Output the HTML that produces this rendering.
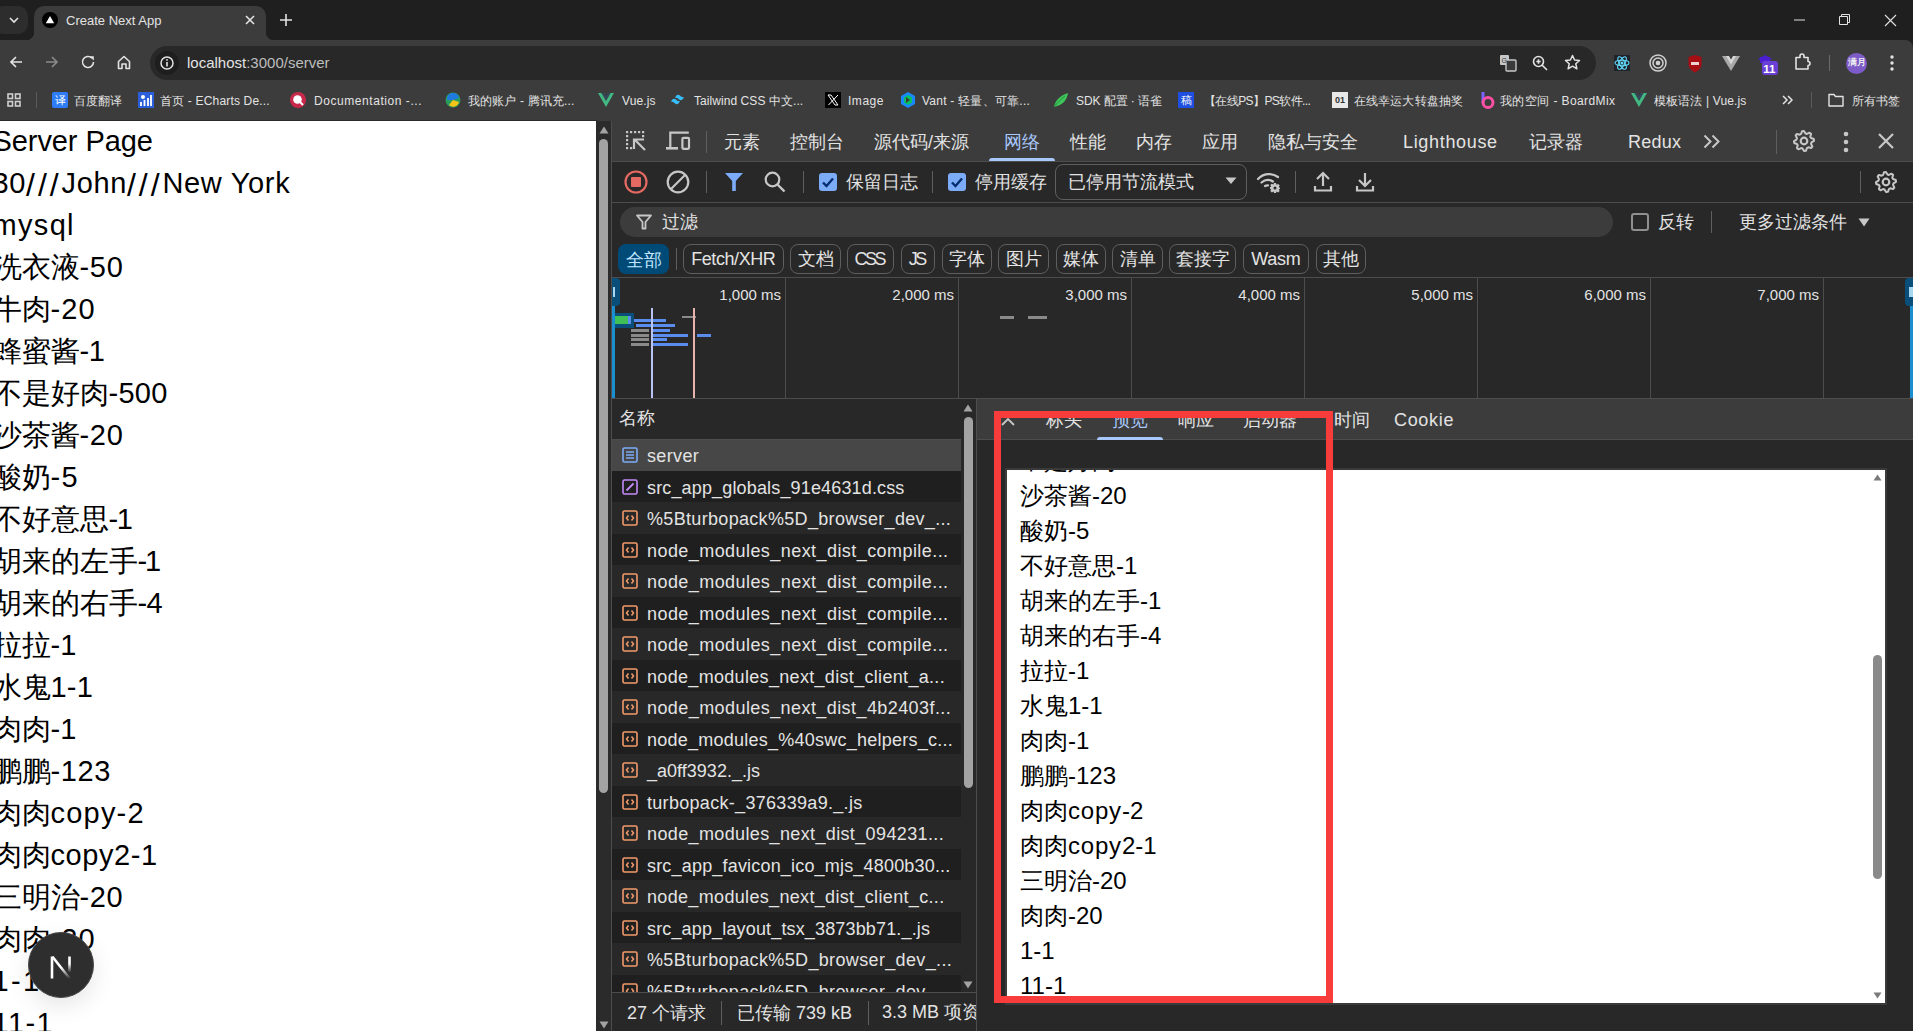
<!DOCTYPE html><html><head><meta charset="utf-8"><style>
*{box-sizing:border-box;margin:0;padding:0}
html,body{width:1913px;height:1031px;overflow:hidden;background:#1f1f1f;font-family:"Liberation Sans",sans-serif;}
.a{position:absolute}
.t{position:absolute;white-space:nowrap;line-height:1}
svg{position:absolute;overflow:visible}
</style></head><body>
<div class="a" style="left:0;top:0;width:1913px;height:40px;background:#1f1f1f"></div>
<div class="a" style="left:0;top:40px;width:1913px;height:81px;background:#3c3c3c;border-top-right-radius:8px"></div>
<div class="a" style="left:-6px;top:6px;width:34px;height:28px;background:#2d2d2d;border-radius:10px"></div>
<svg style="left:9px;top:17px" width="10" height="6"><path d="M1 1 L5 5 L9 1" stroke="#e3e3e3" stroke-width="1.6" fill="none"/></svg>
<div class="a" style="left:34px;top:6px;width:232px;height:35px;background:#3c3c3c;border-radius:10px 10px 0 0"></div>
<div class="a" style="left:26px;top:32px;width:8px;height:8px;background:radial-gradient(circle at 0 0,#1f1f1f 8px,#3c3c3c 8.5px)"></div>
<div class="a" style="left:266px;top:32px;width:8px;height:8px;background:radial-gradient(circle at 100% 0,#1f1f1f 8px,#3c3c3c 8.5px)"></div>
<div class="a" style="left:42px;top:12px;width:16px;height:16px;border-radius:50%;background:#000"></div>
<svg style="left:45px;top:15px" width="10" height="9"><path d="M5 1 L9.2 8.2 L0.8 8.2Z" fill="#fff"/></svg>
<div class="t" style="left:66px;top:14px;font-size:13px;color:#e3e3e3">Create Next App</div>
<svg style="left:245px;top:15px" width="10" height="10"><path d="M1 1L9 9M9 1L1 9" stroke="#e3e3e3" stroke-width="1.6"/></svg>
<svg style="left:280px;top:14px" width="12" height="12"><path d="M6 0V12M0 6H12" stroke="#e3e3e3" stroke-width="1.6"/></svg>
<svg style="left:1794px;top:19px" width="11" height="2"><path d="M0 1H11" stroke="#e3e3e3" stroke-width="1"/></svg>
<svg style="left:1839px;top:14px" width="11" height="11"><path d="M0.5 2.5H8.5V10.5H0.5Z M2.5 2.5V0.5H10.5V8.5H8.5" stroke="#e3e3e3" stroke-width="1" fill="none"/></svg>
<svg style="left:1885px;top:15px" width="11" height="11"><path d="M0 0L11 11M11 0L0 11" stroke="#e3e3e3" stroke-width="1.1"/></svg>
<svg style="left:9px;top:55px" width="14" height="14"><path d="M13 7H2M7 2L2 7L7 12" stroke="#e3e3e3" stroke-width="1.7" fill="none"/></svg>
<svg style="left:45px;top:55px" width="14" height="14"><path d="M1 7H12M7 2L12 7L7 12" stroke="#8a8a8a" stroke-width="1.7" fill="none"/></svg>
<svg style="left:81px;top:55px" width="14" height="14"><path d="M12.5 7A5.5 5.5 0 1 1 10.9 3.1" stroke="#e3e3e3" stroke-width="1.6" fill="none"/><path d="M8.5 1.2H12.8V5.5Z" fill="#e3e3e3"/></svg>
<svg style="left:117px;top:54px" width="14" height="16"><path d="M1.5 7.5L7 2.5L12.5 7.5V14.5H9V10H5V14.5H1.5Z" stroke="#e3e3e3" stroke-width="1.6" fill="none" stroke-linejoin="round"/></svg>
<div class="a" style="left:150px;top:46px;width:1446px;height:34px;background:#282828;border-radius:17px"></div>
<div class="a" style="left:155px;top:51px;width:24px;height:24px;background:#1e1e1e;border-radius:50%"></div>
<svg style="left:160px;top:56px" width="14" height="14"><circle cx="7" cy="7" r="6" stroke="#e3e3e3" stroke-width="1.5" fill="none"/><path d="M7 6V10.5" stroke="#e3e3e3" stroke-width="1.6"/><circle cx="7" cy="3.9" r="0.9" fill="#e3e3e3"/></svg>
<div class="t" style="left:187px;top:55px;font-size:15px;color:#e3e3e3">localhost<span style="color:#bdbdbd">:3000/server</span></div>
<svg style="left:1499px;top:54px" width="18" height="18"><rect x="1" y="1" width="9" height="10" rx="1" fill="#c7c7c7"/><rect x="7" y="6" width="10" height="11" rx="1" stroke="#c7c7c7" stroke-width="1.4" fill="#3a3a3a"/><text x="2.5" y="9" font-size="7" fill="#333" font-family="Liberation Sans">G</text></svg>
<svg style="left:1532px;top:55px" width="16" height="16"><circle cx="6.5" cy="6.5" r="5" stroke="#e3e3e3" stroke-width="1.6" fill="none"/><path d="M10 10L15 15M4.3 6.5H8.7M6.5 4.3V8.7" stroke="#e3e3e3" stroke-width="1.6"/></svg>
<svg style="left:1564px;top:54px" width="17" height="17"><path d="M8.5 1.5L10.6 6L15.5 6.5L11.8 9.8L12.9 14.8L8.5 12.2L4.1 14.8L5.2 9.8L1.5 6.5L6.4 6Z" stroke="#e3e3e3" stroke-width="1.5" fill="none" stroke-linejoin="round"/></svg>
<div class="a" style="left:1614px;top:55px;width:16px;height:16px;background:#20232a"></div>
<svg style="left:1614px;top:55px" width="16" height="16"><g stroke="#61dafb" stroke-width="1.1" fill="none"><ellipse cx="8" cy="8" rx="7" ry="2.7"/><ellipse cx="8" cy="8" rx="7" ry="2.7" transform="rotate(60 8 8)"/><ellipse cx="8" cy="8" rx="7" ry="2.7" transform="rotate(120 8 8)"/></g><circle cx="8" cy="8" r="1.5" fill="#61dafb"/></svg>
<svg style="left:1649px;top:54px" width="18" height="18"><circle cx="9" cy="9" r="8" stroke="#d0d0d0" stroke-width="1.5" fill="none"/><circle cx="9" cy="9" r="5" stroke="#d0d0d0" stroke-width="1.5" fill="none"/><circle cx="9" cy="9" r="2.3" fill="#d0d0d0"/></svg>
<svg style="left:1686px;top:54px" width="18" height="20"><path d="M9 1L15.5 3V10C15.5 14 12.5 16.5 9 18.5C5.5 16.5 2.5 14 2.5 10V3Z" fill="#a50f14"/><rect x="5" y="8" width="8" height="3" fill="#f0d0d0"/></svg>
<svg style="left:1722px;top:56px" width="16" height="15"><path d="M0 0H5L9 7L13 0H18L9 15Z" fill="#a9a9a9"/><path d="M4 0H7L9 3.5L11 0H14L9 8.5Z" fill="#d6d6d6"/></svg>
<svg style="left:1757px;top:53px" width="24" height="24"><path d="M1 6L8 2L15 6L8 10Z" fill="#4b1fd0"/><rect x="3" y="4" width="10" height="6" fill="#4b1fd0"/><rect x="5" y="8" width="16" height="14" rx="3" fill="#6a3fd6"/><text x="6.3" y="19.5" font-size="11.5" font-weight="bold" fill="#fff" font-family="Liberation Sans">11</text></svg>
<svg style="left:1794px;top:53px" width="18" height="18"><path d="M2 4.5H6V3A2 2 0 0 1 10 3V4.5H14V8.5A2 2 0 0 1 14 12.5V16H2Z" stroke="#e3e3e3" stroke-width="1.6" fill="none" stroke-linejoin="round"/></svg>
<div class="a" style="left:1829px;top:55px;width:1px;height:16px;background:#6a6a6a"></div>
<div class="a" style="left:1846px;top:53px;width:21px;height:21px;border-radius:50%;background:#7d5bc9"></div>
<div class="t" style="left:1848px;top:58px;font-size:8.5px;font-weight:bold;color:#eee">满月</div>
<svg style="left:1890px;top:55px" width="4" height="16"><circle cx="2" cy="2" r="1.7" fill="#e3e3e3"/><circle cx="2" cy="8" r="1.7" fill="#e3e3e3"/><circle cx="2" cy="14" r="1.7" fill="#e3e3e3"/></svg>
<svg style="left:7px;top:93px" width="14" height="14"><g fill="none" stroke="#d0d0d0" stroke-width="1.6"><rect x="1" y="1" width="4.5" height="4.5"/><rect x="8.5" y="1" width="4.5" height="4.5"/><rect x="1" y="8.5" width="4.5" height="4.5"/><rect x="8.5" y="8.5" width="4.5" height="4.5"/></g></svg>
<div class="a" style="left:36px;top:92px;width:1px;height:16px;background:#5a5a5a"></div>
<div class="a" style="left:52px;top:92px;width:16px;height:16px;background:#2e7cf6;border-radius:2px;color:#fff;font-size:11px;line-height:16px;text-align:center">译</div>
<div class="t bm" style="left:74px;top:95px;font-size:12px;letter-spacing:0.075px;color:#e3e3e3">百度翻译</div>
<svg style="left:138px;top:92px" width="16" height="16"><rect width="16" height="16" fill="#2b5fd9"/><circle cx="5" cy="5" r="2" fill="#fff"/><path d="M3 14V10M6.5 14V8M10 14V6M13 14V3" stroke="#fff" stroke-width="1.8"/></svg>
<div class="t bm" style="left:160px;top:95px;font-size:12px;letter-spacing:0.173px;color:#e3e3e3">首页 - ECharts De...</div>
<svg style="left:290px;top:92px" width="16" height="16"><circle cx="8" cy="8" r="8" fill="#c8294a"/><circle cx="7.5" cy="7.5" r="4.3" fill="#fff"/><path d="M10 10L13 13" stroke="#fff" stroke-width="2"/></svg>
<div class="t bm" style="left:314px;top:95px;font-size:12px;letter-spacing:0.559px;color:#e3e3e3">Documentation -...</div>
<svg style="left:445px;top:92px" width="16" height="16"><circle cx="8" cy="8" r="7.5" fill="#2a9d5c"/><path d="M2 8A6 6 0 0 1 14 6L8 8Z" fill="#1f7ae0"/><path d="M8 8L14 10A6 6 0 0 1 4 13Z" fill="#f5c518"/></svg>
<div class="t bm" style="left:468px;top:95px;font-size:12px;letter-spacing:0.141px;color:#e3e3e3">我的账户 - 腾讯充...</div>
<svg style="left:598px;top:93px" width="16" height="14"><path d="M0 0H3.5L8 8L12.5 0H16L8 14Z" fill="#42b883"/><path d="M3.5 0H6L8 3.5L10 0H12.5L8 7Z" fill="#35495e"/></svg>
<div class="t bm" style="left:622px;top:95px;font-size:12px;letter-spacing:0.099px;color:#e3e3e3">Vue.js</div>
<svg style="left:671px;top:94px" width="16" height="11"><path d="M4 4C5 1 7 0 9 1.5C10.5 2.6 11 3.5 13 3C12 6 10 7 8 5.5C6.5 4.4 6 3.5 4 4ZM0 8C1 5 3 4 5 5.5C6.5 6.6 7 7.5 9 7C8 10 6 11 4 9.5C2.5 8.4 2 7.5 0 8Z" fill="#38bdf8"/></svg>
<div class="t bm" style="left:694px;top:95px;font-size:12px;letter-spacing:0.065px;color:#e3e3e3">Tailwind CSS 中文...</div>
<div class="a" style="left:825px;top:92px;width:16px;height:16px;background:#000"></div><svg style="left:827px;top:94px" width="12" height="12"><path d="M1 1H4L11 11H8Z" stroke="#fff" stroke-width="1" fill="none"/><path d="M11 1L1.5 11" stroke="#fff" stroke-width="1"/></svg>
<div class="t bm" style="left:848px;top:95px;font-size:12px;letter-spacing:0.528px;color:#e3e3e3">Image</div>
<svg style="left:900px;top:92px" width="16" height="16"><path d="M8 0L15 4V12L8 16L1 12V4Z" fill="#1989fa"/><path d="M8 3L12 5.5V10.5L8 13L4 10.5V5.5Z" fill="#07c160"/><path d="M6 5L10 8L6 11Z" fill="#3c3c3c"/></svg>
<div class="t bm" style="left:922px;top:95px;font-size:12px;letter-spacing:0.242px;color:#e3e3e3">Vant - 轻量、可靠...</div>
<svg style="left:1053px;top:92px" width="16" height="16"><path d="M1 15C2 9 6 4 15 1C14 8 10 13 1 15Z" fill="#3ec55a"/><path d="M1 15C4 11 8 7 12 4" stroke="#2a8f3e" stroke-width="1" fill="none"/></svg>
<div class="t bm" style="left:1076px;top:95px;font-size:12px;letter-spacing:-0.088px;color:#e3e3e3">SDK 配置 · 语雀</div>
<div class="a" style="left:1178px;top:92px;width:16px;height:16px;background:#1f4fe0;color:#fff;font-size:11px;line-height:16px;text-align:center">稿</div>
<div class="t bm" style="left:1204px;top:95px;font-size:12px;letter-spacing:-0.595px;color:#e3e3e3">【在线PS】PS软件...</div>
<div class="a" style="left:1332px;top:92px;width:16px;height:16px;background:#e8e8e8;color:#333;font-size:9px;font-weight:bold;line-height:16px;text-align:center">01</div>
<div class="t bm" style="left:1354px;top:95px;font-size:12px;letter-spacing:0.111px;color:#e3e3e3">在线幸运大转盘抽奖</div>
<svg style="left:1479px;top:91px" width="16" height="18"><path d="M4 1V12" stroke="#7b61ff" stroke-width="3"/><circle cx="9" cy="11.5" r="5" stroke="#ff4fa3" stroke-width="3" fill="none"/></svg>
<div class="t bm" style="left:1500px;top:95px;font-size:12px;letter-spacing:0.409px;color:#e3e3e3">我的空间 - BoardMix</div>
<svg style="left:1631px;top:93px" width="16" height="14"><path d="M0 0H3.5L8 8L12.5 0H16L8 14Z" fill="#42b883"/><path d="M3.5 0H6L8 3.5L10 0H12.5L8 7Z" fill="#35495e"/></svg>
<div class="t bm" style="left:1654px;top:95px;font-size:12px;letter-spacing:0.138px;color:#e3e3e3">模板语法 | Vue.js</div>
<svg style="left:1782px;top:95px" width="11" height="10"><path d="M1 1L5 5L1 9M6 1L10 5L6 9" stroke="#e3e3e3" stroke-width="1.5" fill="none"/></svg>
<div class="a" style="left:1811px;top:92px;width:1px;height:16px;background:#5a5a5a"></div>
<svg style="left:1828px;top:93px" width="16" height="14"><path d="M1 1.5H6L7.5 3.5H15V13H1Z" stroke="#e3e3e3" stroke-width="1.4" fill="none" stroke-linejoin="round"/></svg>
<div class="t bm" style="left:1852px;top:95px;font-size:12px;letter-spacing:0.050px;color:#e3e3e3">所有书签</div>
<div class="a" style="left:0;top:120px;width:597px;height:1px;background:#2a2a2a"></div>
<div class="a" style="left:0;top:121px;width:596px;height:910px;background:#fff;overflow:hidden">
<div class="t" style="left:-7.5px;top:-1px;font-size:29px;line-height:42px;color:#000"><span style="letter-spacing:-0.09px">S</span><span style="letter-spacing:-0.09px">e</span><span style="letter-spacing:-0.09px">r</span><span style="letter-spacing:-0.09px">v</span><span style="letter-spacing:-0.09px">e</span><span style="letter-spacing:-0.09px">r</span><span style="letter-spacing:-0.09px"> </span><span style="letter-spacing:-0.09px">P</span><span style="letter-spacing:-0.09px">a</span><span style="letter-spacing:-0.09px">g</span><span style="letter-spacing:-0.09px">e</span></div>
<div class="t" style="left:-7.5px;top:41px;font-size:29px;line-height:42px;color:#000"><span style="letter-spacing:0.66px">3</span><span style="letter-spacing:0.66px">0</span><span style="font-size:32px;vertical-align:-3px;letter-spacing:2.9px">/</span><span style="font-size:32px;vertical-align:-3px;letter-spacing:2.9px">/</span><span style="font-size:32px;vertical-align:-3px;letter-spacing:2.9px">/</span><span style="letter-spacing:0.66px">J</span><span style="letter-spacing:0.66px">o</span><span style="letter-spacing:0.66px">h</span><span style="letter-spacing:0.66px">n</span><span style="font-size:32px;vertical-align:-3px;letter-spacing:2.9px">/</span><span style="font-size:32px;vertical-align:-3px;letter-spacing:2.9px">/</span><span style="font-size:32px;vertical-align:-3px;letter-spacing:2.9px">/</span><span style="letter-spacing:0.66px">N</span><span style="letter-spacing:0.66px">e</span><span style="letter-spacing:0.66px">w</span><span style="letter-spacing:0.66px"> </span><span style="letter-spacing:0.66px">Y</span><span style="letter-spacing:0.66px">o</span><span style="letter-spacing:0.66px">r</span><span style="letter-spacing:0.66px">k</span></div>
<div class="t" style="left:-7.5px;top:83px;font-size:29px;line-height:42px;color:#000"><span style="letter-spacing:1.32px">m</span><span style="letter-spacing:1.32px">y</span><span style="letter-spacing:1.32px">s</span><span style="letter-spacing:1.32px">q</span><span style="letter-spacing:1.32px">l</span></div>
<div class="t" style="left:-7.5px;top:125px;font-size:29px;line-height:42px;color:#000">洗衣液<span style="letter-spacing:0.67px">-</span><span style="letter-spacing:0.67px">5</span><span style="letter-spacing:0.67px">0</span></div>
<div class="t" style="left:-7.5px;top:167px;font-size:29px;line-height:42px;color:#000">牛肉<span style="letter-spacing:1.13px">-</span><span style="letter-spacing:1.13px">2</span><span style="letter-spacing:1.13px">0</span></div>
<div class="t" style="left:-7.5px;top:209px;font-size:29px;line-height:42px;color:#000">蜂蜜酱<span style="letter-spacing:-0.50px">-</span><span style="letter-spacing:-0.50px">1</span></div>
<div class="t" style="left:-7.5px;top:251px;font-size:29px;line-height:42px;color:#000">不是好肉<span style="letter-spacing:0.25px">-</span><span style="letter-spacing:0.25px">5</span><span style="letter-spacing:0.25px">0</span><span style="letter-spacing:0.25px">0</span></div>
<div class="t" style="left:-7.5px;top:293px;font-size:29px;line-height:42px;color:#000">沙茶酱<span style="letter-spacing:0.67px">-</span><span style="letter-spacing:0.67px">2</span><span style="letter-spacing:0.67px">0</span></div>
<div class="t" style="left:-7.5px;top:335px;font-size:29px;line-height:42px;color:#000">酸奶<span style="letter-spacing:1.40px">-</span><span style="letter-spacing:1.40px">5</span></div>
<div class="t" style="left:-7.5px;top:377px;font-size:29px;line-height:42px;color:#000">不好意思<span style="letter-spacing:-1.30px">-</span><span style="letter-spacing:-1.30px">1</span></div>
<div class="t" style="left:-7.5px;top:419px;font-size:29px;line-height:42px;color:#000">胡来的左手<span style="letter-spacing:-2.10px">-</span><span style="letter-spacing:-2.10px">1</span></div>
<div class="t" style="left:-7.5px;top:461px;font-size:29px;line-height:42px;color:#000">胡来的右手<span style="letter-spacing:-0.60px">-</span><span style="letter-spacing:-0.60px">4</span></div>
<div class="t" style="left:-7.5px;top:503px;font-size:29px;line-height:42px;color:#000">拉拉<span style="letter-spacing:0.20px">-</span><span style="letter-spacing:0.20px">1</span></div>
<div class="t" style="left:-7.5px;top:545px;font-size:29px;line-height:42px;color:#000">水鬼<span style="letter-spacing:0.20px">1</span><span style="letter-spacing:0.20px">-</span><span style="letter-spacing:0.20px">1</span></div>
<div class="t" style="left:-7.5px;top:587px;font-size:29px;line-height:42px;color:#000">肉肉<span style="letter-spacing:0.20px">-</span><span style="letter-spacing:0.20px">1</span></div>
<div class="t" style="left:-7.5px;top:629px;font-size:29px;line-height:42px;color:#000">鹏鹏<span style="letter-spacing:0.60px">-</span><span style="letter-spacing:0.60px">1</span><span style="letter-spacing:0.60px">2</span><span style="letter-spacing:0.60px">3</span></div>
<div class="t" style="left:-7.5px;top:671px;font-size:29px;line-height:42px;color:#000">肉肉<span style="letter-spacing:1.20px">c</span><span style="letter-spacing:1.20px">o</span><span style="letter-spacing:1.20px">p</span><span style="letter-spacing:1.20px">y</span><span style="letter-spacing:1.20px">-</span><span style="letter-spacing:1.20px">2</span></div>
<div class="t" style="left:-7.5px;top:713px;font-size:29px;line-height:42px;color:#000">肉肉<span style="letter-spacing:0.57px">c</span><span style="letter-spacing:0.57px">o</span><span style="letter-spacing:0.57px">p</span><span style="letter-spacing:0.57px">y</span><span style="letter-spacing:0.57px">2</span><span style="letter-spacing:0.57px">-</span><span style="letter-spacing:0.57px">1</span></div>
<div class="t" style="left:-7.5px;top:755px;font-size:29px;line-height:42px;color:#000">三明治<span style="letter-spacing:0.60px">-</span><span style="letter-spacing:0.60px">2</span><span style="letter-spacing:0.60px">0</span></div>
<div class="t" style="left:-7.5px;top:797px;font-size:29px;line-height:42px;color:#000">肉肉<span style="letter-spacing:1.13px">-</span><span style="letter-spacing:1.13px">2</span><span style="letter-spacing:1.13px">0</span></div>
<div class="t" style="left:-7.5px;top:839px;font-size:29px;line-height:42px;color:#000"><span style="letter-spacing:2.30px">1</span><span style="letter-spacing:2.30px">-</span><span style="letter-spacing:2.30px">1</span></div>
<div class="t" style="left:-7.5px;top:881px;font-size:29px;line-height:42px;color:#000"><span style="letter-spacing:1.40px">1</span><span style="letter-spacing:1.40px">1</span><span style="letter-spacing:1.40px">-</span><span style="letter-spacing:1.40px">1</span></div>
<div class="a" style="left:28px;top:811px;width:66px;height:66px;border-radius:50%;background:#2e2e2e;border:1.5px solid #4a4a4a;box-shadow:0 8px 24px rgba(0,0,0,0.10)"></div>
<svg style="left:50px;top:834px" width="22" height="25"><defs><linearGradient id="ng" gradientUnits="userSpaceOnUse" x1="0" y1="0" x2="0" y2="25"><stop offset="0.5" stop-color="#fff"/><stop offset="0.95" stop-color="#fff" stop-opacity="0"/></linearGradient><linearGradient id="ng2" gradientUnits="userSpaceOnUse" x1="0" y1="0" x2="0" y2="25"><stop offset="0.35" stop-color="#fff"/><stop offset="0.7" stop-color="#fff" stop-opacity="0"/></linearGradient></defs><path d="M2 23.5V1.5" stroke="#fff" stroke-width="2.6"/><path d="M2.5 1.8L20 24" stroke="url(#ng)" stroke-width="2.6"/><path d="M19.5 1.5V18" stroke="url(#ng2)" stroke-width="2.6"/></svg>
</div>
<div class="a" style="left:596px;top:121px;width:15px;height:910px;background:#2b2b2b"></div>
<svg style="left:599px;top:126px" width="10" height="8"><path d="M5 0.5L9.5 7.5H0.5Z" fill="#a3a3a3"/></svg>
<div class="a" style="left:599px;top:139px;width:9px;height:654px;background:#a3a3a3;border-radius:5px"></div>
<svg style="left:599px;top:1021px" width="10" height="8"><path d="M5 7.5L9.5 0.5H0.5Z" fill="#a3a3a3"/></svg>
<div class="a" style="left:611px;top:121px;width:1302px;height:910px;background:#282828"></div>
<div class="a" style="left:611px;top:121px;width:1px;height:910px;background:#4d4d4d"></div>
<div class="a" style="left:612px;top:121px;width:1301px;height:40px;background:#3c3c3c"></div>
<div class="a" style="left:612px;top:161px;width:1301px;height:1px;background:#4d4d4d"></div>
<svg style="left:625px;top:130px" width="22" height="22"><g fill="#c7c7c7"><rect x="1" y="1" width="2.2" height="2.2"/><rect x="5" y="1" width="2.2" height="2.2"/><rect x="9" y="1" width="2.2" height="2.2"/><rect x="13" y="1" width="2.2" height="2.2"/><rect x="17" y="1" width="2.2" height="2.2"/><rect x="1" y="5" width="2.2" height="2.2"/><rect x="17" y="5" width="2.2" height="2.2"/><rect x="1" y="9" width="2.2" height="2.2"/><rect x="1" y="13" width="2.2" height="2.2"/><rect x="1" y="17" width="2.2" height="2.2"/><rect x="5" y="17" width="2.2" height="2.2"/></g><path d="M9 19V9.5H19M9.8 9.8L20 20" stroke="#c7c7c7" stroke-width="2.2" fill="none"/></svg>
<svg style="left:666px;top:131px" width="26" height="20"><path d="M4.3 17.5V1.7H22.8" stroke="#c7c7c7" stroke-width="2.2" fill="none"/><path d="M0 17.3H12" stroke="#c7c7c7" stroke-width="2.6"/><rect x="16.4" y="6.8" width="6.6" height="11" rx="1" stroke="#c7c7c7" stroke-width="2.2" fill="none"/></svg>
<div class="a" style="left:706px;top:131px;width:1px;height:22px;background:#5e5e5e"></div>
<div class="t" style="left:724px;top:133px;font-size:18px;letter-spacing:0.000px;color:#e3e3e3">元素</div>
<div class="t" style="left:790px;top:133px;font-size:18px;letter-spacing:0.000px;color:#e3e3e3">控制台</div>
<div class="t" style="left:874px;top:133px;font-size:18px;letter-spacing:0.000px;color:#e3e3e3">源代码/来源</div>
<div class="t" style="left:1004px;top:133px;font-size:18px;letter-spacing:0.000px;color:#a8c7fa">网络</div>
<div class="t" style="left:1070px;top:133px;font-size:18px;letter-spacing:0.000px;color:#e3e3e3">性能</div>
<div class="t" style="left:1136px;top:133px;font-size:18px;letter-spacing:0.000px;color:#e3e3e3">内存</div>
<div class="t" style="left:1202px;top:133px;font-size:18px;letter-spacing:0.000px;color:#e3e3e3">应用</div>
<div class="t" style="left:1268px;top:133px;font-size:18px;letter-spacing:0.000px;color:#e3e3e3">隐私与安全</div>
<div class="t" style="left:1403px;top:133px;font-size:18px;letter-spacing:0.672px;color:#e3e3e3">Lighthouse</div>
<div class="t" style="left:1529px;top:133px;font-size:18px;letter-spacing:0.000px;color:#e3e3e3">记录器</div>
<div class="t" style="left:1628px;top:133px;font-size:18px;letter-spacing:0.234px;color:#e3e3e3">Redux</div>
<div class="a" style="left:989px;top:158px;width:66px;height:3px;background:#a8c7fa;border-radius:3px 3px 0 0"></div>
<svg style="left:1703px;top:134px" width="18" height="15"><path d="M1.5 1.5L7.5 7.5L1.5 13.5M9.5 1.5L15.5 7.5L9.5 13.5" stroke="#c7c7c7" stroke-width="2" fill="none"/></svg>
<div class="a" style="left:1776px;top:130px;width:1px;height:24px;background:#5e5e5e"></div>
<svg style="left:1793px;top:130px" width="22" height="22"><path d="M20.80 9.01 L21.00 10.96 L18.46 12.46 L18.03 13.88 L19.33 16.53 L18.10 18.05 L15.25 17.30 L13.93 18.01 L12.99 20.80 L11.04 21.00 L9.54 18.46 L8.12 18.03 L5.47 19.33 L3.95 18.10 L4.70 15.25 L3.99 13.93 L1.20 12.99 L1.00 11.04 L3.54 9.54 L3.97 8.12 L2.67 5.47 L3.90 3.95 L6.75 4.70 L8.07 3.99 L9.01 1.20 L10.96 1.00 L12.46 3.54 L13.88 3.97 L16.53 2.67 L18.05 3.90 L17.30 6.75 L18.01 8.07Z" stroke="#c7c7c7" stroke-width="2" fill="none" stroke-linejoin="round"/><circle cx="11" cy="11" r="3.3" stroke="#c7c7c7" stroke-width="2.2" fill="none"/></svg>
<svg style="left:1843px;top:131px" width="6" height="22"><circle cx="3" cy="3" r="2.3" fill="#c7c7c7"/><circle cx="3" cy="11" r="2.3" fill="#c7c7c7"/><circle cx="3" cy="19" r="2.3" fill="#c7c7c7"/></svg>
<svg style="left:1878px;top:133px" width="16" height="16"><path d="M1 1L15 15M15 1L1 15" stroke="#c7c7c7" stroke-width="2.2"/></svg>
<div class="a" style="left:612px;top:202px;width:1301px;height:1px;background:#4d4d4d"></div>
<svg style="left:624px;top:170px" width="24" height="24"><circle cx="12" cy="12" r="10.5" stroke="#e46962" stroke-width="2.2" fill="none"/><rect x="7" y="7" width="10" height="10" rx="1" fill="#e46962"/></svg>
<svg style="left:666px;top:170px" width="24" height="24"><circle cx="12" cy="12" r="10.3" stroke="#c7c7c7" stroke-width="2.2" fill="none"/><path d="M19 5L5 19" stroke="#c7c7c7" stroke-width="2.2"/></svg>
<div class="a" style="left:706px;top:171px;width:1px;height:22px;background:#5e5e5e"></div>
<svg style="left:724px;top:172px" width="20" height="20"><path d="M1 1H19L11.8 9V19H8.2V9Z" fill="#7cacf8"/></svg>
<svg style="left:764px;top:171px" width="22" height="22"><circle cx="8.5" cy="8.5" r="6.8" stroke="#c7c7c7" stroke-width="2.2" fill="none"/><path d="M13.5 13.5L20.5 20.5" stroke="#c7c7c7" stroke-width="2.4"/></svg>
<div class="a" style="left:803px;top:171px;width:1px;height:22px;background:#5e5e5e"></div>
<div class="a" style="left:819px;top:173px;width:18px;height:18px;border-radius:3px;background:#7cacf8"></div><svg style="left:819px;top:173px" width="18" height="18"><path d="M4 9.5L7.5 13L14 5.5" stroke="#062e6f" stroke-width="2.4" fill="none"/></svg>
<div class="t" style="left:846px;top:173px;font-size:18px;color:#e3e3e3">保留日志</div>
<div class="a" style="left:932px;top:171px;width:1px;height:22px;background:#5e5e5e"></div>
<div class="a" style="left:948px;top:173px;width:18px;height:18px;border-radius:3px;background:#7cacf8"></div><svg style="left:948px;top:173px" width="18" height="18"><path d="M4 9.5L7.5 13L14 5.5" stroke="#062e6f" stroke-width="2.4" fill="none"/></svg>
<div class="t" style="left:975px;top:173px;font-size:18px;color:#e3e3e3">停用缓存</div>
<div class="a" style="left:1055px;top:164px;width:192px;height:36px;border:1px solid #5e5e5e;border-radius:8px"></div>
<div class="t" style="left:1068px;top:173px;font-size:18px;color:#e3e3e3">已停用节流模式</div>
<svg style="left:1225px;top:177px" width="12" height="8"><path d="M0.5 0.5H11.5L6 7Z" fill="#c7c7c7"/></svg>
<svg style="left:1256px;top:171px" width="26" height="22"><path d="M2 8A15 15 0 0 1 22 6M5.5 11.5A10 10 0 0 1 17 10.5M9 15A5 5 0 0 1 12 14.3" stroke="#c7c7c7" stroke-width="2.2" fill="none" stroke-linecap="round"/><g transform="translate(19 17)"><path d="M-1 -5H1L1.5 -3.2L3.3 -4L4.7 -2.6L3.8 -0.9L5 0L5 1L3.8 1.3L4.6 3L3.2 4.5L1.4 3.6L1 5H-1L-1.4 3.6L-3.2 4.5L-4.6 3L-3.8 1.3L-5 1V-1L-3.8 -1.3L-4.7 -2.9L-3.3 -4.3L-1.5 -3.4Z" fill="#c7c7c7"/><circle r="1.5" fill="#282828"/></g></svg>
<div class="a" style="left:1295px;top:171px;width:1px;height:22px;background:#5e5e5e"></div>
<svg style="left:1313px;top:171px" width="20" height="22"><path d="M10 15V2M4 8L10 2L16 8" stroke="#c7c7c7" stroke-width="2.2" fill="none"/><path d="M2 15V19.5H18V15" stroke="#c7c7c7" stroke-width="2.2" fill="none"/></svg>
<svg style="left:1355px;top:171px" width="20" height="22"><path d="M10 2V15M4 9L10 15L16 9" stroke="#c7c7c7" stroke-width="2.2" fill="none"/><path d="M2 15V19.5H18V15" stroke="#c7c7c7" stroke-width="2.2" fill="none"/></svg>
<div class="a" style="left:1860px;top:171px;width:1px;height:22px;background:#5e5e5e"></div>
<svg style="left:1875px;top:171px" width="22" height="22"><path d="M20.80 9.01 L21.00 10.96 L18.46 12.46 L18.03 13.88 L19.33 16.53 L18.10 18.05 L15.25 17.30 L13.93 18.01 L12.99 20.80 L11.04 21.00 L9.54 18.46 L8.12 18.03 L5.47 19.33 L3.95 18.10 L4.70 15.25 L3.99 13.93 L1.20 12.99 L1.00 11.04 L3.54 9.54 L3.97 8.12 L2.67 5.47 L3.90 3.95 L6.75 4.70 L8.07 3.99 L9.01 1.20 L10.96 1.00 L12.46 3.54 L13.88 3.97 L16.53 2.67 L18.05 3.90 L17.30 6.75 L18.01 8.07Z" stroke="#c7c7c7" stroke-width="2" fill="none" stroke-linejoin="round"/><circle cx="11" cy="11" r="3.3" stroke="#c7c7c7" stroke-width="2.2" fill="none"/></svg>
<div class="a" style="left:620px;top:207px;width:993px;height:30px;background:#3c3c3c;border-radius:15px"></div>
<svg style="left:636px;top:214px" width="16" height="16"><path d="M1 1.5H15L9.5 8V14.5H6.5V8Z" stroke="#c7c7c7" stroke-width="1.8" fill="none" stroke-linejoin="round"/></svg>
<div class="t" style="left:662px;top:213px;font-size:18px;color:#e3e3e3">过滤</div>
<div class="a" style="left:1631px;top:213px;width:18px;height:18px;border-radius:3px;border:2px solid #8f8f8f"></div>
<div class="t" style="left:1658px;top:213px;font-size:18px;color:#e3e3e3">反转</div>
<div class="a" style="left:1711px;top:211px;width:1px;height:22px;background:#5e5e5e"></div>
<div class="t" style="left:1739px;top:213px;font-size:18px;color:#e3e3e3">更多过滤条件</div>
<svg style="left:1858px;top:218px" width="12" height="9"><path d="M0.5 0.5H11.5L6 8.5Z" fill="#c7c7c7"/></svg>
<div class="a" style="left:618px;top:244px;width:51px;height:30px;background:#004a77;border-radius:8px"></div>
<div class="t" style="left:626px;top:251px;font-size:18px;color:#c2e7ff">全部</div>
<div class="a" style="left:676px;top:248px;width:1px;height:22px;background:#5e5e5e"></div>
<div class="a" style="left:683px;top:244px;width:101px;height:30px;border:1px solid #5e5e5e;border-radius:8px;color:#e3e3e3;font-size:18px;line-height:28px;text-align:center;white-space:nowrap;letter-spacing:-0.426px;text-indent:-0.426px">Fetch/XHR</div>
<div class="a" style="left:790px;top:244px;width:51px;height:30px;border:1px solid #5e5e5e;border-radius:8px;color:#e3e3e3;font-size:18px;line-height:28px;text-align:center;white-space:nowrap;letter-spacing:0.000px;text-indent:0.000px">文档</div>
<div class="a" style="left:847px;top:244px;width:47px;height:30px;border:1px solid #5e5e5e;border-radius:8px;color:#e3e3e3;font-size:18px;line-height:28px;text-align:center;white-space:nowrap;letter-spacing:-2.405px;text-indent:-2.405px">CSS</div>
<div class="a" style="left:901px;top:244px;width:34px;height:30px;border:1px solid #5e5e5e;border-radius:8px;color:#e3e3e3;font-size:18px;line-height:28px;text-align:center;white-space:nowrap;letter-spacing:-2.408px;text-indent:-2.408px">JS</div>
<div class="a" style="left:942px;top:244px;width:50px;height:30px;border:1px solid #5e5e5e;border-radius:8px;color:#e3e3e3;font-size:18px;line-height:28px;text-align:center;white-space:nowrap;letter-spacing:0.000px;text-indent:0.000px">字体</div>
<div class="a" style="left:998px;top:244px;width:51px;height:30px;border:1px solid #5e5e5e;border-radius:8px;color:#e3e3e3;font-size:18px;line-height:28px;text-align:center;white-space:nowrap;letter-spacing:0.000px;text-indent:0.000px">图片</div>
<div class="a" style="left:1056px;top:244px;width:50px;height:30px;border:1px solid #5e5e5e;border-radius:8px;color:#e3e3e3;font-size:18px;line-height:28px;text-align:center;white-space:nowrap;letter-spacing:0.000px;text-indent:0.000px">媒体</div>
<div class="a" style="left:1112px;top:244px;width:51px;height:30px;border:1px solid #5e5e5e;border-radius:8px;color:#e3e3e3;font-size:18px;line-height:28px;text-align:center;white-space:nowrap;letter-spacing:0.000px;text-indent:0.000px">清单</div>
<div class="a" style="left:1169px;top:244px;width:67px;height:30px;border:1px solid #5e5e5e;border-radius:8px;color:#e3e3e3;font-size:18px;line-height:28px;text-align:center;white-space:nowrap;letter-spacing:0.000px;text-indent:0.000px">套接字</div>
<div class="a" style="left:1243px;top:244px;width:66px;height:30px;border:1px solid #5e5e5e;border-radius:8px;color:#e3e3e3;font-size:18px;line-height:28px;text-align:center;white-space:nowrap;letter-spacing:-0.332px;text-indent:-0.332px">Wasm</div>
<div class="a" style="left:1316px;top:244px;width:50px;height:30px;border:1px solid #5e5e5e;border-radius:8px;color:#e3e3e3;font-size:18px;line-height:28px;text-align:center;white-space:nowrap;letter-spacing:0.000px;text-indent:0.000px">其他</div>
<div class="a" style="left:612px;top:277px;width:1301px;height:1px;background:#4d4d4d"></div>
<div class="a" style="left:785px;top:278px;width:1px;height:120px;background:#4d4d4d"></div>
<div class="t" style="left:685px;width:96px;text-align:right;top:287px;font-size:15px;color:#e3e3e3">1,000 ms</div>
<div class="a" style="left:958px;top:278px;width:1px;height:120px;background:#4d4d4d"></div>
<div class="t" style="left:858px;width:96px;text-align:right;top:287px;font-size:15px;color:#e3e3e3">2,000 ms</div>
<div class="a" style="left:1131px;top:278px;width:1px;height:120px;background:#4d4d4d"></div>
<div class="t" style="left:1031px;width:96px;text-align:right;top:287px;font-size:15px;color:#e3e3e3">3,000 ms</div>
<div class="a" style="left:1304px;top:278px;width:1px;height:120px;background:#4d4d4d"></div>
<div class="t" style="left:1204px;width:96px;text-align:right;top:287px;font-size:15px;color:#e3e3e3">4,000 ms</div>
<div class="a" style="left:1477px;top:278px;width:1px;height:120px;background:#4d4d4d"></div>
<div class="t" style="left:1377px;width:96px;text-align:right;top:287px;font-size:15px;color:#e3e3e3">5,000 ms</div>
<div class="a" style="left:1650px;top:278px;width:1px;height:120px;background:#4d4d4d"></div>
<div class="t" style="left:1550px;width:96px;text-align:right;top:287px;font-size:15px;color:#e3e3e3">6,000 ms</div>
<div class="a" style="left:1823px;top:278px;width:1px;height:120px;background:#4d4d4d"></div>
<div class="t" style="left:1723px;width:96px;text-align:right;top:287px;font-size:15px;color:#e3e3e3">7,000 ms</div>
<div class="a" style="left:612px;top:398px;width:1301px;height:1px;background:#4d4d4d"></div>
<div class="a" style="left:612px;top:278px;width:8px;height:28px;background:#0a4f7a;border-radius:0 4px 4px 0"></div>
<div class="a" style="left:613px;top:287px;width:2px;height:10px;background:#a8d8f0"></div>
<div class="a" style="left:612px;top:306px;width:3px;height:92px;background:#1a8fd0"></div>
<div class="a" style="left:615px;top:313px;width:19px;height:15px;background:#0a4f7a"></div>
<div class="a" style="left:615px;top:316px;width:13px;height:8px;background:#3fbf58"></div>
<div class="a" style="left:628px;top:316px;width:3px;height:8px;background:#5b8def"></div>
<div class="a" style="left:634px;top:319px;width:32px;height:3px;background:#5b8def"></div>
<div class="a" style="left:636px;top:324px;width:39px;height:3px;background:#5b8def"></div>
<div class="a" style="left:631px;top:329px;width:18px;height:3px;background:#8a8a8a"></div>
<div class="a" style="left:652px;top:329px;width:18px;height:3px;background:#5b8def"></div>
<div class="a" style="left:631px;top:334px;width:18px;height:3px;background:#8a8a8a"></div>
<div class="a" style="left:652px;top:334px;width:36px;height:3px;background:#5b8def"></div>
<div class="a" style="left:697px;top:334px;width:14px;height:3px;background:#5b8def"></div>
<div class="a" style="left:631px;top:338px;width:18px;height:3px;background:#8a8a8a"></div>
<div class="a" style="left:652px;top:338px;width:15px;height:3px;background:#5b8def"></div>
<div class="a" style="left:631px;top:343px;width:18px;height:3px;background:#8a8a8a"></div>
<div class="a" style="left:652px;top:343px;width:36px;height:3px;background:#5b8def"></div>
<div class="a" style="left:682px;top:316px;width:14px;height:2px;background:#8a8a8a"></div>
<div class="a" style="left:1000px;top:316px;width:14px;height:3px;background:#8a8a8a"></div>
<div class="a" style="left:1028px;top:316px;width:19px;height:3px;background:#8a8a8a"></div>
<div class="a" style="left:651px;top:308px;width:2px;height:90px;background:#b9c4f5"></div>
<div class="a" style="left:693px;top:308px;width:2px;height:90px;background:#e6b3ae"></div>
<div class="a" style="left:1905px;top:278px;width:8px;height:28px;background:#0a4f7a;border-radius:4px 0 0 4px"></div>
<div class="a" style="left:1909px;top:287px;width:4px;height:10px;background:#a8d8f0"></div>
<div class="a" style="left:1910px;top:306px;width:3px;height:92px;background:#1a8fd0"></div>
<div class="a" style="left:612px;top:399px;width:349px;height:40px;background:#282828"></div>
<div class="t" style="left:619px;top:409px;font-size:18px;color:#e3e3e3">名称</div>
<div class="a" style="left:612px;top:439px;width:349px;height:553px;overflow:hidden">
<div class="a" style="left:0;top:0.0px;width:349px;height:31.5px;background:#474747"></div>
<svg style="left:10px;top:8.0px" width="16" height="16"><rect x="1" y="1" width="14" height="14" rx="1.5" stroke="#7cacf8" stroke-width="1.6" fill="none"/><path d="M4 5H12M4 8H12M4 11H12" stroke="#7cacf8" stroke-width="1.5"/></svg>
<div class="t" style="left:35px;top:8.0px;font-size:18px;letter-spacing:0.347px;color:#e3e3e3">server</div>
<div class="a" style="left:0;top:31.5px;width:349px;height:31.5px;background:#1f1f1f"></div>
<svg style="left:10px;top:39.5px" width="16" height="16"><rect x="1" y="1" width="14" height="14" rx="1.5" stroke="#c58af9" stroke-width="1.6" fill="none"/><path d="M4.5 11.5L11.5 4.5" stroke="#c58af9" stroke-width="1.8"/></svg>
<div class="t" style="left:35px;top:39.5px;font-size:18px;letter-spacing:0.154px;color:#e3e3e3">src_app_globals_91e4631d.css</div>
<div class="a" style="left:0;top:63.0px;width:349px;height:31.5px;background:#282828"></div>
<svg style="left:10px;top:71.0px" width="16" height="16"><rect x="1" y="1" width="14" height="14" rx="1.5" stroke="#f29a6a" stroke-width="1.6" fill="none"/><path d="M6.5 5.5L4.5 8L6.5 10.5M9.5 5.5L11.5 8L9.5 10.5" stroke="#f29a6a" stroke-width="1.5" fill="none"/></svg>
<div class="t" style="left:35px;top:71.0px;font-size:18px;letter-spacing:0.323px;color:#e3e3e3">%5Bturbopack%5D_browser_dev_...</div>
<div class="a" style="left:0;top:94.5px;width:349px;height:31.5px;background:#1f1f1f"></div>
<svg style="left:10px;top:102.5px" width="16" height="16"><rect x="1" y="1" width="14" height="14" rx="1.5" stroke="#f29a6a" stroke-width="1.6" fill="none"/><path d="M6.5 5.5L4.5 8L6.5 10.5M9.5 5.5L11.5 8L9.5 10.5" stroke="#f29a6a" stroke-width="1.5" fill="none"/></svg>
<div class="t" style="left:35px;top:102.5px;font-size:18px;letter-spacing:0.434px;color:#e3e3e3">node_modules_next_dist_compile...</div>
<div class="a" style="left:0;top:126.0px;width:349px;height:31.5px;background:#282828"></div>
<svg style="left:10px;top:134.0px" width="16" height="16"><rect x="1" y="1" width="14" height="14" rx="1.5" stroke="#f29a6a" stroke-width="1.6" fill="none"/><path d="M6.5 5.5L4.5 8L6.5 10.5M9.5 5.5L11.5 8L9.5 10.5" stroke="#f29a6a" stroke-width="1.5" fill="none"/></svg>
<div class="t" style="left:35px;top:134.0px;font-size:18px;letter-spacing:0.434px;color:#e3e3e3">node_modules_next_dist_compile...</div>
<div class="a" style="left:0;top:157.5px;width:349px;height:31.5px;background:#1f1f1f"></div>
<svg style="left:10px;top:165.5px" width="16" height="16"><rect x="1" y="1" width="14" height="14" rx="1.5" stroke="#f29a6a" stroke-width="1.6" fill="none"/><path d="M6.5 5.5L4.5 8L6.5 10.5M9.5 5.5L11.5 8L9.5 10.5" stroke="#f29a6a" stroke-width="1.5" fill="none"/></svg>
<div class="t" style="left:35px;top:165.5px;font-size:18px;letter-spacing:0.434px;color:#e3e3e3">node_modules_next_dist_compile...</div>
<div class="a" style="left:0;top:189.0px;width:349px;height:31.5px;background:#282828"></div>
<svg style="left:10px;top:197.0px" width="16" height="16"><rect x="1" y="1" width="14" height="14" rx="1.5" stroke="#f29a6a" stroke-width="1.6" fill="none"/><path d="M6.5 5.5L4.5 8L6.5 10.5M9.5 5.5L11.5 8L9.5 10.5" stroke="#f29a6a" stroke-width="1.5" fill="none"/></svg>
<div class="t" style="left:35px;top:197.0px;font-size:18px;letter-spacing:0.434px;color:#e3e3e3">node_modules_next_dist_compile...</div>
<div class="a" style="left:0;top:220.5px;width:349px;height:31.5px;background:#1f1f1f"></div>
<svg style="left:10px;top:228.5px" width="16" height="16"><rect x="1" y="1" width="14" height="14" rx="1.5" stroke="#f29a6a" stroke-width="1.6" fill="none"/><path d="M6.5 5.5L4.5 8L6.5 10.5M9.5 5.5L11.5 8L9.5 10.5" stroke="#f29a6a" stroke-width="1.5" fill="none"/></svg>
<div class="t" style="left:35px;top:228.5px;font-size:18px;letter-spacing:0.318px;color:#e3e3e3">node_modules_next_dist_client_a...</div>
<div class="a" style="left:0;top:252.0px;width:349px;height:31.5px;background:#282828"></div>
<svg style="left:10px;top:260.0px" width="16" height="16"><rect x="1" y="1" width="14" height="14" rx="1.5" stroke="#f29a6a" stroke-width="1.6" fill="none"/><path d="M6.5 5.5L4.5 8L6.5 10.5M9.5 5.5L11.5 8L9.5 10.5" stroke="#f29a6a" stroke-width="1.5" fill="none"/></svg>
<div class="t" style="left:35px;top:260.0px;font-size:18px;letter-spacing:0.423px;color:#e3e3e3">node_modules_next_dist_4b2403f...</div>
<div class="a" style="left:0;top:283.5px;width:349px;height:31.5px;background:#1f1f1f"></div>
<svg style="left:10px;top:291.5px" width="16" height="16"><rect x="1" y="1" width="14" height="14" rx="1.5" stroke="#f29a6a" stroke-width="1.6" fill="none"/><path d="M6.5 5.5L4.5 8L6.5 10.5M9.5 5.5L11.5 8L9.5 10.5" stroke="#f29a6a" stroke-width="1.5" fill="none"/></svg>
<div class="t" style="left:35px;top:291.5px;font-size:18px;letter-spacing:0.244px;color:#e3e3e3">node_modules_%40swc_helpers_c...</div>
<div class="a" style="left:0;top:315.0px;width:349px;height:31.5px;background:#282828"></div>
<svg style="left:10px;top:323.0px" width="16" height="16"><rect x="1" y="1" width="14" height="14" rx="1.5" stroke="#f29a6a" stroke-width="1.6" fill="none"/><path d="M6.5 5.5L4.5 8L6.5 10.5M9.5 5.5L11.5 8L9.5 10.5" stroke="#f29a6a" stroke-width="1.5" fill="none"/></svg>
<div class="t" style="left:35px;top:323.0px;font-size:18px;letter-spacing:0.017px;color:#e3e3e3">_a0ff3932._.js</div>
<div class="a" style="left:0;top:346.5px;width:349px;height:31.5px;background:#1f1f1f"></div>
<svg style="left:10px;top:354.5px" width="16" height="16"><rect x="1" y="1" width="14" height="14" rx="1.5" stroke="#f29a6a" stroke-width="1.6" fill="none"/><path d="M6.5 5.5L4.5 8L6.5 10.5M9.5 5.5L11.5 8L9.5 10.5" stroke="#f29a6a" stroke-width="1.5" fill="none"/></svg>
<div class="t" style="left:35px;top:354.5px;font-size:18px;letter-spacing:0.306px;color:#e3e3e3">turbopack-_376339a9._.js</div>
<div class="a" style="left:0;top:378.0px;width:349px;height:31.5px;background:#282828"></div>
<svg style="left:10px;top:386.0px" width="16" height="16"><rect x="1" y="1" width="14" height="14" rx="1.5" stroke="#f29a6a" stroke-width="1.6" fill="none"/><path d="M6.5 5.5L4.5 8L6.5 10.5M9.5 5.5L11.5 8L9.5 10.5" stroke="#f29a6a" stroke-width="1.5" fill="none"/></svg>
<div class="t" style="left:35px;top:386.0px;font-size:18px;letter-spacing:0.368px;color:#e3e3e3">node_modules_next_dist_094231...</div>
<div class="a" style="left:0;top:409.5px;width:349px;height:31.5px;background:#1f1f1f"></div>
<svg style="left:10px;top:417.5px" width="16" height="16"><rect x="1" y="1" width="14" height="14" rx="1.5" stroke="#f29a6a" stroke-width="1.6" fill="none"/><path d="M6.5 5.5L4.5 8L6.5 10.5M9.5 5.5L11.5 8L9.5 10.5" stroke="#f29a6a" stroke-width="1.5" fill="none"/></svg>
<div class="t" style="left:35px;top:417.5px;font-size:18px;letter-spacing:0.185px;color:#e3e3e3">src_app_favicon_ico_mjs_4800b30...</div>
<div class="a" style="left:0;top:441.0px;width:349px;height:31.5px;background:#282828"></div>
<svg style="left:10px;top:449.0px" width="16" height="16"><rect x="1" y="1" width="14" height="14" rx="1.5" stroke="#f29a6a" stroke-width="1.6" fill="none"/><path d="M6.5 5.5L4.5 8L6.5 10.5M9.5 5.5L11.5 8L9.5 10.5" stroke="#f29a6a" stroke-width="1.5" fill="none"/></svg>
<div class="t" style="left:35px;top:449.0px;font-size:18px;letter-spacing:0.332px;color:#e3e3e3">node_modules_next_dist_client_c...</div>
<div class="a" style="left:0;top:472.5px;width:349px;height:31.5px;background:#1f1f1f"></div>
<svg style="left:10px;top:480.5px" width="16" height="16"><rect x="1" y="1" width="14" height="14" rx="1.5" stroke="#f29a6a" stroke-width="1.6" fill="none"/><path d="M6.5 5.5L4.5 8L6.5 10.5M9.5 5.5L11.5 8L9.5 10.5" stroke="#f29a6a" stroke-width="1.5" fill="none"/></svg>
<div class="t" style="left:35px;top:480.5px;font-size:18px;letter-spacing:0.153px;color:#e3e3e3">src_app_layout_tsx_3873bb71._.js</div>
<div class="a" style="left:0;top:504.0px;width:349px;height:31.5px;background:#282828"></div>
<svg style="left:10px;top:512.0px" width="16" height="16"><rect x="1" y="1" width="14" height="14" rx="1.5" stroke="#f29a6a" stroke-width="1.6" fill="none"/><path d="M6.5 5.5L4.5 8L6.5 10.5M9.5 5.5L11.5 8L9.5 10.5" stroke="#f29a6a" stroke-width="1.5" fill="none"/></svg>
<div class="t" style="left:35px;top:512.0px;font-size:18px;letter-spacing:0.353px;color:#e3e3e3">%5Bturbopack%5D_browser_dev_...</div>
<div class="a" style="left:0;top:535.5px;width:349px;height:31.5px;background:#1f1f1f"></div>
<svg style="left:10px;top:543.5px" width="16" height="16"><rect x="1" y="1" width="14" height="14" rx="1.5" stroke="#f29a6a" stroke-width="1.6" fill="none"/><path d="M6.5 5.5L4.5 8L6.5 10.5M9.5 5.5L11.5 8L9.5 10.5" stroke="#f29a6a" stroke-width="1.5" fill="none"/></svg>
<div class="t" style="left:35px;top:543.5px;font-size:18px;letter-spacing:0.353px;color:#e3e3e3">%5Bturbopack%5D_browser_dev_...</div>
</div>
<div class="a" style="left:612px;top:439px;width:349px;height:1px;background:#4d4d4d"></div>
<div class="a" style="left:961px;top:399px;width:15px;height:593px;background:#282828"></div>
<svg style="left:963px;top:404px" width="10" height="8"><path d="M5 0.5L9.5 7.5H0.5Z" fill="#a3a3a3"/></svg>
<div class="a" style="left:964px;top:417px;width:9px;height:371px;background:#a3a3a3;border-radius:5px"></div>
<svg style="left:963px;top:981px" width="10" height="8"><path d="M5 7.5L9.5 0.5H0.5Z" fill="#a3a3a3"/></svg>
<div class="a" style="left:976px;top:399px;width:1px;height:632px;background:#4d4d4d"></div>
<div class="a" style="left:612px;top:992px;width:364px;height:1px;background:#4d4d4d"></div>
<div class="t" style="left:627px;top:1004px;font-size:18px;color:#e3e3e3">27 个请求</div>
<div class="a" style="left:721px;top:1001px;width:1px;height:24px;background:#5e5e5e"></div>
<div class="t" style="left:737px;top:1004px;font-size:18px;color:#e3e3e3">已传输 739 kB</div>
<div class="a" style="left:868px;top:1001px;width:1px;height:24px;background:#5e5e5e"></div>
<div class="a" style="left:869px;top:993px;width:107px;height:38px;overflow:hidden">
<div class="t" style="left:13px;top:10px;font-size:18px;color:#e3e3e3">3.3 MB 项资源</div>
</div>
<div class="a" style="left:977px;top:399px;width:936px;height:41px;background:#3c3c3c"></div>
<div class="a" style="left:977px;top:439px;width:936px;height:1px;background:#4d4d4d"></div>
<svg style="left:1001px;top:417px" width="14" height="9"><path d="M1 8L7 2L13 8" stroke="#c7c7c7" stroke-width="1.8" fill="none"/></svg>
<div class="t" style="left:1046px;top:411px;font-size:18px;letter-spacing:0.000px;color:#e3e3e3">标头</div>
<div class="t" style="left:1112px;top:411px;font-size:18px;letter-spacing:0.000px;color:#a8c7fa">预览</div>
<div class="t" style="left:1178px;top:411px;font-size:18px;letter-spacing:0.000px;color:#e3e3e3">响应</div>
<div class="t" style="left:1243px;top:411px;font-size:18px;letter-spacing:0.000px;color:#e3e3e3">启动器</div>
<div class="t" style="left:1334px;top:411px;font-size:18px;letter-spacing:0.000px;color:#e3e3e3">时间</div>
<div class="t" style="left:1394px;top:411px;font-size:18px;letter-spacing:0.678px;color:#e3e3e3">Cookie</div>
<div class="a" style="left:1097px;top:437px;width:66px;height:3px;background:#a8c7fa;border-radius:3px 3px 0 0"></div>
<div class="a" style="left:1005px;top:468px;width:882px;height:537px;background:#3a3a3a"></div>
<div class="a" style="left:1007px;top:470px;width:878px;height:533px;background:#fff;overflow:hidden">
<div class="t" style="left:13px;top:-27px;font-size:24px;line-height:35px;color:#000">不是好肉-500</div>
<div class="t" style="left:13px;top:8px;font-size:24px;line-height:35px;color:#000">沙茶酱-20</div>
<div class="t" style="left:13px;top:43px;font-size:24px;line-height:35px;color:#000">酸奶-5</div>
<div class="t" style="left:13px;top:78px;font-size:24px;line-height:35px;color:#000">不好意思-1</div>
<div class="t" style="left:13px;top:113px;font-size:24px;line-height:35px;color:#000">胡来的左手-1</div>
<div class="t" style="left:13px;top:148px;font-size:24px;line-height:35px;color:#000">胡来的右手-4</div>
<div class="t" style="left:13px;top:183px;font-size:24px;line-height:35px;color:#000">拉拉-1</div>
<div class="t" style="left:13px;top:218px;font-size:24px;line-height:35px;color:#000">水鬼1-1</div>
<div class="t" style="left:13px;top:253px;font-size:24px;line-height:35px;color:#000">肉肉-1</div>
<div class="t" style="left:13px;top:288px;font-size:24px;line-height:35px;color:#000">鹏鹏-123</div>
<div class="t" style="left:13px;top:323px;font-size:24px;line-height:35px;color:#000">肉肉<span style="letter-spacing:0.8px">copy</span>-2</div>
<div class="t" style="left:13px;top:358px;font-size:24px;line-height:35px;color:#000">肉肉<span style="letter-spacing:0.8px">copy</span>2-1</div>
<div class="t" style="left:13px;top:393px;font-size:24px;line-height:35px;color:#000">三明治-20</div>
<div class="t" style="left:13px;top:428px;font-size:24px;line-height:35px;color:#000">肉肉-20</div>
<div class="t" style="left:13px;top:463px;font-size:24px;line-height:35px;color:#000">1-1</div>
<div class="t" style="left:13px;top:498px;font-size:24px;line-height:35px;color:#000">11-1</div>
</div>
<svg style="left:1873px;top:474px" width="9" height="7"><path d="M4.5 0.5L8.5 6.5H0.5Z" fill="#7a7a7a"/></svg>
<div class="a" style="left:1873px;top:655px;width:9px;height:224px;background:#8a8a8a;border-radius:5px"></div>
<svg style="left:1873px;top:992px" width="9" height="7"><path d="M4.5 6.5L8.5 0.5H0.5Z" fill="#7a7a7a"/></svg>
<div class="a" style="left:994px;top:411px;width:339px;height:592px;border:7px solid #f83b3b"></div>
</body></html>
